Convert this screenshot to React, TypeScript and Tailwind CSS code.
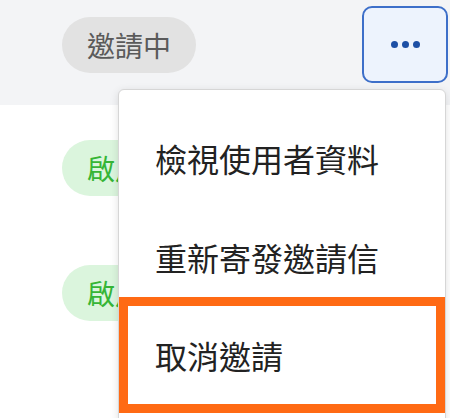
import React from 'react';

const font = { fontFamily: '"Noto Sans CJK TC", "Noto Sans", sans-serif' };

// 狀態標籤
function StatusPill({ label, tone }: { label: string; tone: 'gray' | 'green' }) {
  const cls =
    tone === 'gray'
      ? 'bg-[#e2e2e2] text-[#5a5a5a]'
      : 'bg-[#dbf5dd] text-[#36b536]';
  return (
    <span className={`inline-flex h-[56px] items-center rounded-full px-[25px] text-[28px] leading-none ${cls}`}>
      {label}
    </span>
  );
}

export default function App() {
  const rows = [
    { label: '邀請中', tone: 'gray' as const, h: 'h-[105px] pb-[16px]', bg: 'bg-[#f3f4f6]' },
    { label: '啟用', tone: 'green' as const, h: 'h-[125px]', bg: 'bg-white' },
    { label: '啟用', tone: 'green' as const, h: 'h-[125px]', bg: 'bg-white' },
  ];

  return (
    <div className="relative h-[418px] w-[450px] overflow-hidden bg-white" style={font}>
      {rows.map((row, i) => (
        <div key={i} className={`flex items-center justify-between pl-[62px] pr-[2px] ${row.h} ${row.bg}`}>
          <StatusPill label={row.label} tone={row.tone} />
          {i === 0 && (
            <button className="flex h-[77px] w-[86px] items-center justify-center gap-[4px] rounded-[10px] border-2 border-[#3d6fc9] bg-[#edf3fd]">
              <span className="h-[7px] w-[7px] rounded-full bg-[#1d4fa5]" />
              <span className="h-[7px] w-[7px] rounded-full bg-[#1d4fa5]" />
              <span className="h-[7px] w-[7px] rounded-full bg-[#1d4fa5]" />
            </button>
          )}
        </div>
      ))}

      {/* 下拉選單 */}
      <div className="absolute left-[118px] top-[89px] h-[340px] w-[328px] rounded-md border border-[#d6d6d6] bg-white pt-[18px] shadow-[0_2px_8px_rgba(0,0,0,0.12)]">
        <div className="flex h-[99px] items-center pl-[36px] text-[32px] leading-none text-[#222]">
          檢視使用者資料
        </div>
        <div className="flex h-[99px] items-center pl-[36px] text-[32px] leading-none text-[#222]">
          重新寄發邀請信
        </div>
        <div className="-mt-[9px] flex h-[116px] items-center border-[9px] border-[#ff6a14] pl-[27px] text-[32px] leading-none text-[#222]">
          取消邀請
        </div>
      </div>
    </div>
  );
}
